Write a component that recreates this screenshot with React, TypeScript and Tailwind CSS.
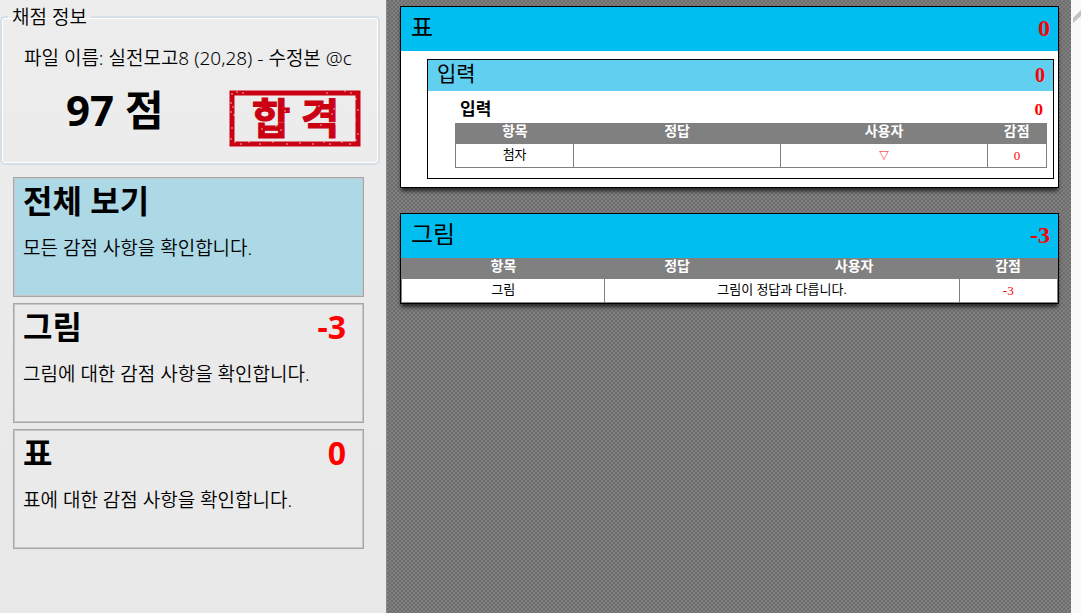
import React from 'react';

interface Category {
  title: string;
  description: string;
  score?: number;
}

const CATEGORIES: Category[] = [
  { title: '전체 보기', description: '모든 감점 사항을 확인합니다.' },
  { title: '그림', description: '그림에 대한 감점 사항을 확인합니다.', score: -3 },
  { title: '표', description: '표에 대한 감점 사항을 확인합니다.', score: 0 },
];

// Worn spots in the ink of the stamp: x, y
const SPECKS = [
  [3, 4], [8, 2], [14, 3], [2, 13], [4, 17], [2, 22], [5, 25], [3, 38],
  [2, 49], [6, 52], [12, 54], [20, 52], [31, 54], [44, 52], [58, 54],
  [71, 53], [84, 54], [95, 52], [101, 54], [113, 52], [121, 54], [127, 50],
  [129, 44], [126, 30], [129, 20], [127, 9], [122, 3], [116, 1], [98, 3],
  [28, 42], [33, 39], [37, 42], [52, 40], [56, 21], [47, 36], [32, 18],
  [77, 17], [90, 16], [103, 24], [105, 19], [76, 36], [92, 35], [107, 34],
];

const PassStamp: React.FC = () => (
  <svg
    viewBox="0 0 132 56"
    className="mt-[10px] h-14 w-[132px] shrink-0 overflow-visible"
    role="img"
    aria-label="합격"
  >
    <rect x="3" y="3" width="126" height="51" fill="none" stroke="#cb0013" strokeWidth="5" />
    <g textAnchor="middle" className="fill-[#cb0013] stroke-[#cb0013] stroke-1 text-[42px] font-bold">
      <text x="42" y="44">
        합
      </text>
      <text x="91" y="44">
        격
      </text>
    </g>
    {SPECKS.map(([x, y]) => (
      <circle key={`${x}-${y}`} cx={x} cy={y} r="1" fill="#ececec" opacity="0.5" />
    ))}
  </svg>
);

const CategoryButton: React.FC<{ category: Category; selected: boolean; onSelect: () => void }> = ({
  category,
  selected,
  onSelect,
}) => (
  <button
    type="button"
    onClick={onSelect}
    className={`block w-full border border-[#a6a6a6] px-[9px] pb-[34px] text-left shadow-[inset_0_0_0_1px_#c6c8c8] ${
      selected ? 'bg-[#add8e6]' : 'bg-[#eaeaea]'
    }`}
  >
    <span className="flex items-center justify-between pr-2 text-[32px] font-bold leading-[46px]">
      <span>{category.title}</span>
      {category.score !== undefined && <span className="text-[#ff0000]">{category.score}</span>}
    </span>
    <span className="mt-[10px] block whitespace-nowrap text-[19px] font-[350] leading-7">
      {category.description}
    </span>
  </button>
);

const Panel: React.FC<{ title: string; score: number; children: React.ReactNode }> = ({
  title,
  score,
  children,
}) => (
  <section className="border border-black bg-white shadow-[0_4px_4px_-1px_#000000b0]">
    <header className="flex h-11 items-center justify-between bg-[#00bff0] pb-[2px] pl-[10px] pr-2 text-2xl">
      <h2>{title}</h2>
      <span className="font-bold text-[#ff0000]">{score}</span>
    </header>
    {children}
  </section>
);

const HeaderRow: React.FC<{ widths: string[] }> = ({ widths }) => (
  <thead>
    <tr className="h-5 bg-[#808080] text-sm leading-4 text-white">
      {['항목', '정답', '사용자', '감점'].map((label, i) => (
        <th key={label} scope="col" className={`pb-[3px] align-middle font-bold ${widths[i]}`}>
          {label}
        </th>
      ))}
    </tr>
  </thead>
);

export default function App() {
  const [selected, setSelected] = React.useState(0);

  return (
    <div className="flex min-h-screen bg-[#ebebeb] text-black">
      <aside className="w-[387px] shrink-0 border-r border-[#8a8a8a] bg-linear-to-b from-[#ededed] to-[#e8e8e8] pr-[6px] pt-[5px] font-['Noto_Sans','Noto_Sans_CJK_KR',sans-serif]">
        <fieldset className="h-40 rounded-[5px] border-2 border-[#d5dfe5] pl-[22px] pr-[17px] shadow-[inset_0_0_0_1px_#ffffff]">
          <legend className="-ml-4 px-1 text-[19px] font-[350] leading-6">채점 정보</legend>
          <p className="mt-[15px] overflow-hidden whitespace-nowrap text-[19px] font-[350] leading-7">
            파일 이름: 실전모고8 (20,28) - 수정본 @c
          </p>
          <div className="mt-2 flex items-start justify-between pl-[42px]">
            <strong className="text-[42px] font-bold leading-[60px]">97 점</strong>
            <PassStamp />
          </div>
        </fieldset>
        <nav className="flex flex-col gap-[6px] pl-[13px] pr-4 pt-3">
          {CATEGORIES.map((category, i) => (
            <CategoryButton
              key={category.title}
              category={category}
              selected={selected === i}
              onSelect={() => setSelected(i)}
            />
          ))}
        </nav>
      </aside>

      <main className="flex min-w-0 flex-1 flex-col gap-[25px] bg-[#747474] bg-[repeating-conic-gradient(#808080_0_25%,#6d6d6d_0_50%)] bg-size-[4px_4px] pl-[13px] pr-3 pt-[6px] font-['Liberation_Serif','Noto_Sans_CJK_KR',serif]">
        <Panel title="표" score={0}>
          <div className="mb-2 ml-[26px] mr-1 mt-2 border border-black pb-[10px]">
            <header className="flex h-[31px] items-center justify-between bg-[#61cff0] pb-[2px] pl-[9px] pr-2 text-[21px] leading-[29px]">
              <h3>입력</h3>
              <span className="text-xl font-bold text-[#ff0000]">0</span>
            </header>
            <div className="flex h-8 items-end justify-between pl-8 pr-[10px] text-[17px] font-bold leading-[26px]">
              <h4>입력</h4>
              <span className="text-[#ff0000]">0</span>
            </div>
            <div className="ml-[27px] mr-[6px]">
              <table className="w-full table-fixed border-collapse border border-[#808080]">
                <HeaderRow widths={['w-[20%]', 'w-[35%]', 'w-[35%]', 'w-[10%]']} />
                <tbody>
                  <tr className="h-6 text-center text-[13px] leading-5">
                    <td className="border border-[#808080] pb-[2px]">첨자</td>
                    <td className="border border-[#808080]"></td>
                    <td className="border border-[#808080] text-[10px] font-bold text-[#ff0000]">▽</td>
                    <td className="border border-[#808080] text-[#ff0000]">0</td>
                  </tr>
                </tbody>
              </table>
            </div>
          </div>
        </Panel>

        <Panel title="그림" score={-3}>
          <table className="w-full table-fixed border-collapse border border-[#808080]">
            <HeaderRow widths={['w-[31%]', 'w-[22%]', 'w-[32%]', 'w-[15%]']} />
            <tbody>
              <tr className="h-6 text-center text-[13px] leading-5">
                <td className="border border-[#808080] pb-[2px]">그림</td>
                <td colSpan={2} className="border border-[#808080] pb-[2px]">
                  그림이 정답과 다릅니다.
                </td>
                <td className="border border-[#808080] text-[#ff0000]">-3</td>
              </tr>
            </tbody>
          </table>
        </Panel>
      </main>

      {/* Scroll bar track, its up arrow runs past the window edge */}
      <div className="w-[10px] shrink-0 overflow-hidden bg-[#f9f9f9] pt-[9px]">
        <svg viewBox="0 0 10 15" className="h-[15px] w-[10px]" aria-hidden="true">
          <path d="M2 9 10 1v6L2 14Z" fill="#c3c3c3" />
        </svg>
      </div>
    </div>
  );
}
